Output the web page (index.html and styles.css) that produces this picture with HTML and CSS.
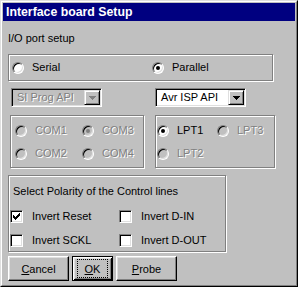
FILE: index.html
```html
<!DOCTYPE html>
<html>
<head>
<meta charset="utf-8">
<link rel="stylesheet" href="styles.css">
</head>
<body>
<div class="window">
  <div class="frame">
    <div class="titlebar">Interface board Setup</div>
    <div class="content">
      <div class="label">I/O port setup</div>
      <div class="group mode">
        <div class="opt serial"><span class="radio"></span>Serial</div>
        <div class="opt"><span class="radio on"></span>Parallel</div>
      </div>
      <div class="selects">
        <div class="combo disabled"><span class="combo-text">SI Prog API</span><span class="combo-btn"><svg width="7" height="4" viewBox="0 0 7 4"><path class="arrow" d="M0 0h7v1h-7zM1 1h5v1h-5zM2 2h3v1h-3zM3 3h1v1h-1z"/></svg></span></div>
        <div class="combo avr"><span class="combo-text">Avr ISP API</span><span class="combo-btn"><svg width="7" height="4" viewBox="0 0 7 4"><path class="arrow" d="M0 0h7v1h-7zM1 1h5v1h-5zM2 2h3v1h-3zM3 3h1v1h-1z"/></svg></span></div>
      </div>
      <div class="ports">
        <div class="group portgrid com">
          <div class="opt dis"><span class="radio dis"></span>COM1</div>
          <div class="opt dis"><span class="radio dis on"></span>COM3</div>
          <div class="opt dis"><span class="radio dis"></span>COM2</div>
          <div class="opt dis"><span class="radio dis"></span>COM4</div>
        </div>
        <div class="group portgrid lpt">
          <div class="opt"><span class="radio on"></span>LPT1</div>
          <div class="opt dis"><span class="radio dis"></span>LPT3</div>
          <div class="opt dis"><span class="radio dis"></span>LPT2</div>
        </div>
      </div>
      <div class="group polarity">
        <div class="gtitle">Select Polarity of the Control lines</div>
        <div class="checks">
          <div class="opt"><span class="check"><svg width="7" height="7" viewBox="0 0 7 7"><path d="M6 0h1v1h-1zM5 1h2v1h-2zM0 2h1v1h-1zM4 2h3v1h-3zM0 3h2v1h-2zM3 3h3v1h-3zM0 4h5v1h-5zM1 5h3v1h-3zM2 6h1v1h-1z"/></svg></span>Invert Reset</div>
          <div class="opt"><span class="check"></span>Invert D-IN</div>
          <div class="opt"><span class="check"></span>Invert SCKL</div>
          <div class="opt"><span class="check"></span>Invert D-OUT</div>
        </div>
      </div>
      <div class="buttons">
        <button class="btn cancel"><u>C</u>ancel</button>
        <button class="btn ok"><span class="focus"><u>O</u>K</span></button>
        <button class="btn probe"><u>P</u>robe</button>
      </div>
    </div>
  </div>
</div>
</body>
</html>
```
FILE: styles.css
```css
body {
  margin: 0;
  background: #fff;
  font-family: "Liberation Sans", Arial, sans-serif;
  font-size: 11px;
  color: #000;
}
.window {
  width: 298px;
  height: 287px;
  box-sizing: border-box;
  border: 1px solid;
  border-color: #dfdfdf #000 #000 #dfdfdf;
  background: #c0c0c0;
}
.frame {
  height: 100%;
  box-sizing: border-box;
  border: 1px solid;
  border-color: #fff #808080 #808080 #fff;
  padding: 1px;
}
.titlebar {
  height: 18px;
  line-height: 18px;
  background: #000080;
  color: #fff;
  font-weight: bold;
  font-size: 12.3px;
  padding-left: 3px;
}
.content {
  padding-left: 5px;
}
.label {
  margin-top: 11px;
  line-height: 13px;
}
.group {
  box-sizing: border-box;
  border: 1px solid #808080;
  box-shadow: inset 1px 1px #fff, 1px 1px #fff;
}
.mode {
  width: 265px;
  height: 27px;
  margin-top: 9px;
  display: flex;
  align-items: center;
  padding-left: 3px;
}
.opt {
  display: flex;
  align-items: center;
  line-height: 13px;
  white-space: nowrap;
}
.serial {
  width: 140px;
}
.dis {
  color: #808080;
  text-shadow: 1px 1px 0 #fff;
}
.radio {
  position: relative;
  flex: none;
  width: 12px;
  height: 12px;
  box-sizing: border-box;
  border-radius: 50%;
  border: 1px solid;
  border-color: #808080 #fff #fff #808080;
  box-shadow: inset 1px 1px #000, inset -1px -1px #dfdfdf;
  background: #fff;
  margin-right: 8px;
}
.radio.on::after {
  content: "";
  position: absolute;
  left: 3px;
  top: 3px;
  width: 4px;
  height: 4px;
  border-radius: 50%;
  background: #000;
}
.radio.dis {
  background: #c0c0c0;
}
.radio.dis.on::after {
  background: #808080;
}
.selects {
  display: flex;
  margin-top: 7px;
  height: 19px;
}
.combo {
  width: 91px;
  height: 19px;
  box-sizing: border-box;
  border: 1px solid;
  border-color: #808080 #fff #fff #808080;
  box-shadow: inset 1px 1px #000, inset -1px -1px #dfdfdf;
  background: #fff;
  display: flex;
  padding: 1px;
  margin-left: 3px;
}
.combo.avr {
  margin-left: 53px;
}
.combo-text {
  flex: 1;
  padding-left: 4px;
  line-height: 15px;
  white-space: nowrap;
}
.combo.disabled {
  background: #c0c0c0;
}
.combo.disabled .combo-text {
  color: #808080;
  text-shadow: 1px 1px 0 #fff;
}
.combo.disabled .arrow {
  fill: #808080;
}
.combo-btn {
  flex: none;
  width: 16px;
  height: 15px;
  box-sizing: border-box;
  border: 1px solid;
  border-color: #dfdfdf #000 #000 #dfdfdf;
  box-shadow: inset 1px 1px #fff, inset -1px -1px #808080;
  background: #c0c0c0;
  display: flex;
  align-items: center;
  justify-content: center;
}
.combo-btn svg {
  display: block;
}
.ports {
  display: flex;
  margin-top: 8px;
}
.portgrid {
  height: 53px;
  display: grid;
  grid-auto-rows: 23px;
  align-items: center;
}
.com {
  width: 134px;
  margin-left: 2px;
  grid-template-columns: 67px 1fr;
  padding: 3px 0 0 4px;
}
.lpt {
  width: 120px;
  margin-left: 11px;
  grid-template-columns: 60px 1fr;
  padding: 3px 0 0 1px;
}
.polarity {
  margin-top: 7px;
  width: 218px;
  height: 77px;
  padding: 9px 0 0 1px;
}
.gtitle {
  padding-left: 3px;
  line-height: 13px;
}
.checks {
  display: grid;
  grid-template-columns: 109px 1fr;
  grid-auto-rows: 24px;
  margin-top: 6px;
  align-items: center;
}
.check {
  flex: none;
  width: 13px;
  height: 13px;
  box-sizing: border-box;
  border: 1px solid;
  border-color: #808080 #fff #fff #808080;
  box-shadow: inset 1px 1px #000, inset -1px -1px #dfdfdf;
  background: #fff;
  margin-right: 9px;
  display: flex;
  align-items: center;
  justify-content: center;
}
.check svg {
  display: block;
}
.buttons {
  display: flex;
  margin-top: 4px;
  gap: 3px;
}
.btn {
  height: 25px;
  box-sizing: border-box;
  border: 1px solid;
  border-color: #fff #000 #000 #fff;
  box-shadow: inset -1px -1px #808080, inset 1px 1px #dfdfdf;
  background: #c0c0c0;
  font: inherit;
  color: #000;
  padding: 0;
  display: flex;
  align-items: center;
  justify-content: center;
}
.cancel {
  width: 61px;
}
.ok {
  width: 41px;
  border-color: #000;
  box-shadow: inset 1px 1px #fff, inset -1px -1px #000, inset 2px 2px #dfdfdf, inset -2px -2px #808080;
}
.focus {
  width: 31px;
  height: 19px;
  box-sizing: border-box;
  border: 1px dotted #000;
  display: flex;
  align-items: center;
  justify-content: center;
}
.probe {
  width: 61px;
}
```
